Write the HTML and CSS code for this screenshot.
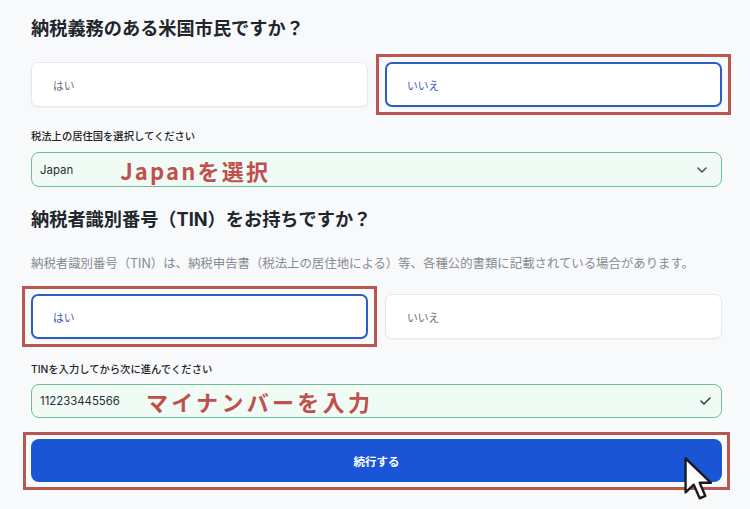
FILE: index.html
```html
<!DOCTYPE html>
<html lang="ja">
<head>
<meta charset="utf-8">
<link rel="stylesheet" href="styles.css">
</head>
<body>
<main class="form">
  <h2 class="q q1">納税義務のある米国市民ですか？</h2>
  <div class="choices row1">
    <div class="choice">はい</div>
    <div class="annot-wrap">
      <div class="choice selected">いいえ</div>
      <span class="annot"></span>
    </div>
  </div>

  <div class="label label1">税法上の居住国を選択してください</div>
  <div class="field select">
    <span class="value">Japan</span>
    <span class="note note1">Japanを選択</span>
    <svg class="chev" width="10" height="6" viewBox="0 0 10 6"><path d="M1 1 L5 5 L9 1" fill="none" stroke="#555" stroke-width="1.6" stroke-linecap="round" stroke-linejoin="round"/></svg>
  </div>

  <h2 class="q q2">納税者識別番号（TIN）をお持ちですか？</h2>
  <p class="desc">納税者識別番号（TIN）は、納税申告書（税法上の居住地による）等、各種公的書類に記載されている場合があります。</p>
  <div class="choices row2">
    <div class="annot-wrap">
      <div class="choice selected">はい</div>
      <span class="annot"></span>
    </div>
    <div class="choice">いいえ</div>
  </div>

  <div class="label label2">TINを入力してから次に進んでください</div>
  <div class="field input">
    <span class="value">112233445566</span>
    <span class="note note2">マイナンバーを入力</span>
    <svg class="check" width="11" height="8" viewBox="0 0 11 8"><path d="M1 4 L4 7 L10 1" fill="none" stroke="#2d3b36" stroke-width="1.5" stroke-linecap="round" stroke-linejoin="round"/></svg>
  </div>

  <div class="annot-wrap submit-wrap">
    <button class="submit">続行する</button>
    <span class="annot annot-btn"></span>
    <svg class="cursor" width="31" height="47" viewBox="0 0 13 20"><path d="M1 1 L1 15.5 L4.5 12.2 L7 18 L9.4 17 L7 11.4 L11.8 11.4 Z" fill="#fff" stroke="#1a1a1a" stroke-width="1" stroke-linejoin="round"/></svg>
  </div>
</main>
</body>
</html>
```

FILE: styles.css
```css
* { box-sizing: border-box; }
html, body { margin: 0; padding: 0; }
body {
  background: #f8f9fb;
  font-family: Inter, "Noto Sans CJK JP", sans-serif;
  color: #1f2329;
  width: 750px;
  height: 509px;
  overflow: hidden;
}
.form {
  padding: 15px 28px 0 31px;
  display: flex;
  flex-direction: column;
}
.q {
  margin: 0;
  font-size: 18.2px;
  line-height: 26px;
  font-weight: 700;
  color: #22262c;
  letter-spacing: 0;
}
.q1 { margin-bottom: 21px; }
.q2 { margin-top: 19px; }
.choices {
  display: grid;
  grid-template-columns: 1fr 1fr;
  gap: 17px;
}
.choice {
  height: 45px;
  background: #fff;
  border: 1px solid #e6e8ec;
  border-radius: 7px;
  box-shadow: 0 1px 2px rgba(0,0,0,0.04);
  display: flex;
  align-items: center;
  padding-left: 21px;
  font-size: 10.8px;
  color: #6b7078;
}
.choice.selected {
  border: 2px solid #2a5fc4;
  padding-left: 20px;
  color: #4258c2;
}
.annot-wrap { position: relative; }
.annot {
  position: absolute;
  left: -9px; right: -9px; top: -8px; bottom: -8px;
  border: 3px solid #bb5552;
  pointer-events: none;
}
.label {
  font-size: 10.3px;
  line-height: 16px;
  font-weight: 500;
  color: #222;
}
.label1 { margin-top: 21px; margin-bottom: 8px; }
.label2 { margin-top: 22px; margin-bottom: 7px; }
.field {
  background: #f1fbf6;
  border: 1px solid #6cbf98;
  border-radius: 8px;
  display: flex;
  align-items: center;
  padding: 0 10px 0 8px;
  position: relative;
}
.select { height: 35px; }
.input { height: 34px; }
.value {
  font-size: 11.4px;
  color: #2a2f35;
}
.note {
  font-family: "Noto Sans CJK JP", sans-serif;
  font-weight: 700;
  font-size: 22px;
  letter-spacing: 2.6px;
  color: #c0504d;
  line-height: 1;
}
.note1 { margin-left: 47px; letter-spacing: 2.2px; }
.note2 { margin-left: 26px; letter-spacing: 3.3px; }
.chev { margin-left: auto; margin-right: 4px; }
.check { margin-left: auto; margin-right: 0; }
.desc {
  margin: 23px 0 0 0;
  font-size: 12.4px;
  line-height: 18px;
  color: #878b92;
}
.row2 { margin-top: 21px; }
.submit-wrap { margin-top: 21px; }
.submit {
  display: block;
  width: 100%;
  height: 43px;
  border: none;
  border-radius: 8px;
  background: #1a55d6;
  color: #fff;
  font-family: Inter, "Noto Sans CJK JP", sans-serif;
  font-size: 11.5px;
  font-weight: 700;
}
.annot-btn { left: -8px; right: -8px; top: -7px; bottom: -8px; }
.cursor {
  position: absolute;
  left: 652px;
  top: 17px;
}
```
